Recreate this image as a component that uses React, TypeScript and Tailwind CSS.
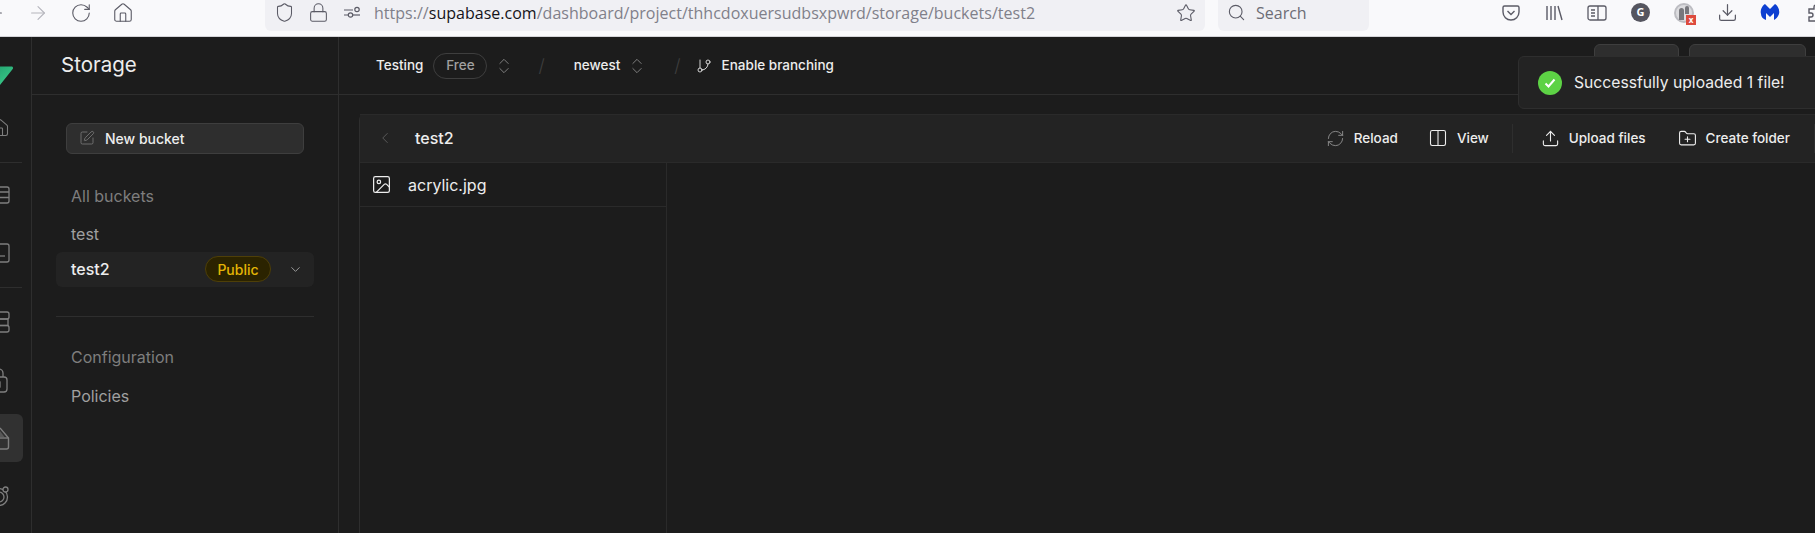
import React from 'react';
import {
  ArrowLeft,
  ArrowRight,
  ChevronDown,
  ChevronLeft,
  ChevronsUpDown,
  Columns2,
  Download,
  FolderPlus,
  GitBranch,
  Home,
  Image,
  Lock,
  RefreshCw,
  RotateCw,
  Search,
  Shield,
  SquarePen,
  Star,
  Upload,
} from 'lucide-react';

const RailButton: React.FC<{ active?: boolean; children: React.ReactNode }> = ({ active, children }) => (
  <div className={`flex h-[48px] w-[46px] items-center justify-center rounded-md text-[#7e7e7e] ${active ? 'bg-[#313131]' : ''}`}>
    {children}
  </div>
);

const BrowserBar = () => (
  <div className="flex h-[37px] shrink-0 items-start overflow-hidden border-b border-[#d4d4d8] bg-[#f9f9fb] font-['Open_Sans',sans-serif] text-[#5b5b66]">
    <div className="-ml-[27px] flex h-[25px] shrink-0 items-center">
      <div className="flex w-[43px] justify-center"><ArrowLeft size={22} strokeWidth={1.2} /></div>
      <div className="flex w-[43px] justify-center text-[#b5b5bc]"><ArrowRight size={22} strokeWidth={1.2} /></div>
      <div className="flex w-[43px] justify-center"><RotateCw size={22} strokeWidth={1.2} /></div>
      <div className="-ml-[1px] flex w-[43px] justify-center"><Home size={22} strokeWidth={1.2} /></div>
    </div>
    <div className="ml-[121px] flex h-[31px] w-[940px] shrink-0 items-center rounded-b-md bg-[#f0f0f4] pb-[6px] pl-[9px] pr-[9px]">
      <Shield size={21} strokeWidth={1.2} />
      <Lock size={21} strokeWidth={1.2} className="ml-[13px]" />
      <svg width="20" height="20" viewBox="0 0 20 20" fill="none" stroke="currentColor" strokeWidth="1.2" className="ml-[13px]">
        <path d="M2 7h9M2 12h4" />
        <circle cx="15" cy="6.500" r="2.200" />
        <circle cx="8.500" cy="12" r="2.200" />
        <path d="M11 12h7" />
      </svg>
      <span className="ml-[12px] whitespace-nowrap text-[16px] tracking-[0.02px] text-[#80808a]">
        https://<span className="text-[#15141a]">supabase.com</span>/dashboard/project/thhcdoxuersudbsxpwrd/storage/buckets/test2
      </span>
      <Star size={20} strokeWidth={1.3} className="ml-auto" />
    </div>
    <div className="ml-[13px] flex h-[31px] w-[151px] shrink-0 items-center rounded-b-md bg-[#f0f0f4] pb-[6px] pl-[9px]">
      <Search size={19} strokeWidth={1.4} />
      <span className="ml-[10px] text-[16px] text-[#6d6d76]">Search</span>
    </div>
    <div className="flex h-[25px] shrink-0 items-center">
      <svg width="20" height="20" viewBox="0 0 20 20" fill="none" stroke="currentColor" strokeWidth="1.4" className="ml-[132px]">
        <path d="M3.500 3h13A1.500 1.500 0 0 1 18 4.500V9a8 8 0 0 1-16 0V4.500A1.500 1.500 0 0 1 3.500 3z" />
        <path d="M6.500 8l3.500 3.500L13.500 8" />
      </svg>
      <svg width="20" height="20" viewBox="0 0 20 20" fill="none" stroke="currentColor" strokeWidth="1.400" className="ml-[23px]">
        <path d="M3 3v14M7 3v14M11 3v14M14 3l4 14" />
      </svg>
      <svg width="20" height="20" viewBox="0 0 20 20" fill="none" stroke="currentColor" strokeWidth="1.300" className="ml-[23px]">
        <rect x="1" y="3" width="18" height="14" rx="2" />
        <path d="M11 3v14M4 7h4M4 10h4M4 13h4" />
      </svg>
      <div className="ml-[24px] flex h-[19px] w-[19px] items-center justify-center rounded-full bg-[#55555f] text-[11px] font-bold text-white">G</div>
      <div className="relative ml-[24px] h-[20px] w-[20px] overflow-visible rounded-full border-2 border-[#bdbdc2] bg-[#dcdcdf]">
        <div className="absolute left-[3px] top-[3px] h-[12px] w-[5px] rounded-t-full bg-[#77777c]" />
        <div className="absolute left-[9px] top-[1px] h-[8px] w-[4px] rounded-t-full bg-[#77777c]" />
        <div className="absolute -bottom-[4px] -right-[4px] flex h-[10px] w-[10px] items-center justify-center bg-[#dd4b3e] text-[8px] font-bold leading-none text-white">x</div>
      </div>
      <Download size={21} strokeWidth={1.400} className="ml-[23px]" />
      <svg width="20" height="20" viewBox="0 0 20 20" className="ml-[22px]">
        <path d="M5 1 L10 6 L15 1 C18 3 20 7 19 11 C18 14 16 16 14 17 L14 10 L10 14 L6 10 L6 17 C3 16 1 14 1 11 C0 7 2 3 5 1Z" fill="#0d3fd1" />
      </svg>
      <svg width="20" height="20" viewBox="0 0 20 20" fill="none" stroke="currentColor" strokeWidth="1.400" className="ml-[27px]">
        <path d="M2 6h5V4a2 2 0 0 1 4 0v2h5v5h2a2 2 0 0 1 0 4h-2v3H2v-4h2a2 2 0 0 0 0-4H2z" />
      </svg>
    </div>
  </div>
);

const Rail = () => (
  <div className="w-[32px] shrink-0 overflow-hidden border-r border-[#2e2e2e]">
    <div className="-ml-[23px] flex w-[46px] flex-col items-center">
      <div className="flex h-[48px] w-full items-end justify-center">
        <svg width="30" height="19" viewBox="0 0 30 19">
          <defs>
            <linearGradient id="brand" x1="0" y1="0" x2="1" y2="1">
              <stop offset="0" stopColor="#1f9d6b" />
              <stop offset="1" stopColor="#3ecf8e" />
            </linearGradient>
          </defs>
          <path d="M5 0.500H26.500C28 0.500 28.500 2 27.500 3.200L15 19H5z" fill="url(#brand)" />
        </svg>
      </div>
      <div className="mt-[19px] w-full">
        <RailButton><Home size={20} strokeWidth={1.300} /></RailButton>
      </div>
      <div className="mb-[8px] mt-[10px] h-px w-[44px] bg-[#2e2e2e]" />
      <div className="flex w-full flex-col gap-[10px]">
        <RailButton>
          <svg width="20" height="20" viewBox="0 0 20 20" fill="none" stroke="currentColor" strokeWidth="1.300">
            <rect x="1" y="2" width="18" height="16" rx="2" />
            <path d="M1 7h18M1 12.500h18" />
          </svg>
        </RailButton>
        <RailButton>
          <svg width="20" height="20" viewBox="0 0 20 20" fill="none" stroke="currentColor" strokeWidth="1.300">
            <rect x="1" y="1" width="18" height="18" rx="2" />
            <path d="M8 13h7" />
          </svg>
        </RailButton>
      </div>
      <div className="my-[10px] h-px w-[44px] bg-[#2e2e2e]" />
      <div className="flex w-full flex-col gap-[10px]">
        <RailButton>
          <svg width="20" height="22" viewBox="0 0 20 22" fill="none" stroke="currentColor" strokeWidth="1.300">
            <rect x="-4" y="1" width="23" height="7" rx="2" />
            <rect x="-4" y="8" width="22" height="6.500" />
            <rect x="-4" y="14.500" width="23" height="6.500" rx="2" />
          </svg>
        </RailButton>
        <RailButton>
          <svg width="20" height="26" viewBox="0 0 20 26" fill="none" stroke="currentColor" strokeWidth="1.300">
            <path d="M5 10V6a4 4 0 0 1 8 0v4" />
            <rect x="-2" y="10" width="19" height="15" rx="3" />
            <rect x="-2" y="15" width="12" height="5" />
          </svg>
        </RailButton>
        <RailButton active>
          <svg width="20" height="24" viewBox="0 0 20 24" fill="none" stroke="currentColor" strokeWidth="1.400">
            <path d="M10 2L18.500 12V21a2 2 0 0 1-2 2H0" />
            <path d="M0 12h18.500" />
            <path d="M10 5L14.500 11H10z" fill="currentColor" fillOpacity="0.5" stroke="none" />
          </svg>
        </RailButton>
        <RailButton>
          <svg width="20" height="20" viewBox="0 0 20 20" fill="none" stroke="currentColor" strokeWidth="1.300">
            <circle cx="9" cy="11" r="8.500" />
            <circle cx="9" cy="11" r="5" />
            <circle cx="15.500" cy="3.500" r="2.500" fill="#1c1c1c" />
          </svg>
        </RailButton>
      </div>
    </div>
  </div>
);

const Sidebar = () => (
  <div className="w-[307px] shrink-0 border-r border-[#2e2e2e]">
    <div className="flex h-[58px] items-center border-b border-[#2e2e2e] pl-[29px] text-[20.500px] text-[#ededed]">Storage</div>
    <div className="px-[24px] pt-[28px]">
      <div className="mx-[10px] flex h-[31px] items-center gap-[10px] rounded-md border border-[#3e3e3e] bg-[#2e2e2e] pb-[1px] pl-[12px] text-[14px] font-medium text-[#ededed]">
        <SquarePen size={16} strokeWidth={1.200} className="text-[#7e7e7e]" />
        New bucket
      </div>
      <div className="mt-[30px] px-[15px] text-[16px] leading-[24px] text-[#7e7e7e]">All buckets</div>
      <div className="mt-[14px] px-[15px] text-[16px] leading-[24px] text-[#a0a0a0]">test</div>
      <div className="mt-[6px] flex h-[35px] items-center rounded-md bg-[#232323] pb-[1px] pl-[15px] pr-[11px]">
        <span className="text-[16px] font-medium text-[#ededed]">test2</span>
        <span className="ml-auto flex h-[26px] w-[66px] items-center justify-center rounded-full border border-[#4e3f08] bg-[#2b2300] text-[14px] font-medium text-[#e3b505]">Public</span>
        <ChevronDown size={15} strokeWidth={1.500} className="ml-[17px] text-[#a0a0a0]" />
      </div>
      <div className="mt-[29px] h-px bg-[#2e2e2e]" />
      <div className="mt-[28px] px-[15px] text-[16px] leading-[24px] text-[#7e7e7e]">Configuration</div>
      <div className="mt-[15px] px-[15px] text-[16px] leading-[24px] text-[#a0a0a0]">Policies</div>
    </div>
  </div>
);

const Slash: React.FC<{ className: string }> = ({ className }) => (
  <span className={`text-[18px] font-light text-[#3e3e3e] ${className}`}>/</span>
);

const ToolbarAction: React.FC<{ icon: React.ReactNode; label: string; className?: string }> = ({ icon, label, className }) => (
  <div className={`flex items-center gap-[9px] text-[13.500px] font-medium text-[#ededed] ${className ?? ''}`}>
    {icon}
    {label}
  </div>
);

const MainPanel = () => (
  <div className="flex min-w-0 flex-1 flex-col">
    <div className="flex h-[58px] shrink-0 items-center border-b border-[#2e2e2e] pl-[37px] text-[13.500px] font-medium text-[#ededed]">
      Testing
      <span className="ml-[10px] flex h-[26px] w-[54px] items-center justify-center rounded-full border border-[#3e3e3e] text-[#a0a0a0]">Free</span>
      <ChevronsUpDown size={20} strokeWidth={1.200} className="ml-[7px] text-[#7e7e7e]" />
      <Slash className="ml-[24px] mr-[29px]" />
      newest
      <ChevronsUpDown size={20} strokeWidth={1.200} className="ml-[7px] text-[#7e7e7e]" />
      <Slash className="ml-[27px] mr-[15px]" />
      <GitBranch size={16} strokeWidth={1.300} />
      <span className="ml-[10px]">Enable branching</span>
      <div className="mb-[8px] ml-auto flex gap-[10px] pr-[9px]">
        <div className="h-[36px] w-[85px] rounded-md border border-[#3e3e3e] bg-[#2e2e2e]" />
        <div className="h-[36px] w-[117px] rounded-md border border-[#3e3e3e] bg-[#2e2e2e]" />
      </div>
    </div>
    <div className="flex min-h-0 flex-1 flex-col pl-[20px] pt-[19px]">
      <div className="flex min-h-0 flex-1 flex-col rounded-tl-md border-l border-[#2e2e2e]">
        <div className="flex h-[49px] shrink-0 items-center border-b border-t border-[#2a2a2a] bg-[#232323] pb-[1px]">
          <ChevronLeft size={18} strokeWidth={1.300} className="ml-[16px] text-[#5a5a5a]" />
          <span className="ml-[21px] text-[16px] font-medium text-[#ededed]">test2</span>
          <ToolbarAction className="ml-auto" icon={<RefreshCw size={19} strokeWidth={1} className="text-[#a0a0a0]" />} label="Reload" />
          <ToolbarAction className="ml-[30px]" icon={<Columns2 size={20} strokeWidth={1.300} />} label="View" />
          <div className="ml-[23px] h-[29px] w-px bg-[#2e2e2e]" />
          <ToolbarAction className="ml-[28px]" icon={<Upload size={19} strokeWidth={1.400} />} label="Upload files" />
          <ToolbarAction className="ml-[32px]" icon={<FolderPlus size={19} strokeWidth={1.400} />} label="Create folder" />
          <div className="ml-[24px] h-[29px] w-px bg-[#2e2e2e]" />
        </div>
        <div className="min-h-0 flex-1">
          <div className="h-full w-[307px] border-r border-[#2a2a2a]">
            <div className="flex h-[44px] items-center border-b border-[#2a2a2a] pl-[11px] text-[16px] text-[#ededed]">
              <Image size={21} strokeWidth={1.400} />
              <span className="ml-[16px]">acrylic.jpg</span>
            </div>
          </div>
        </div>
      </div>
    </div>
  </div>
);

export default function App() {
  return (
    <div className="relative flex h-[533px] w-[1815px] flex-col overflow-hidden bg-[#1c1c1c] font-['Inter',sans-serif]">
      <BrowserBar />
      <div className="flex min-h-0 flex-1">
        <Rail />
        <Sidebar />
        <MainPanel />
      </div>
      {/* toast sits over the header */}
      <div className="absolute left-[1518px] top-[56px] flex h-[53px] w-[310px] items-center rounded-md border border-[#2e2e2e] bg-[#232323] pl-[19px]">
        <div className="flex h-[24px] w-[24px] items-center justify-center rounded-full bg-[#5dd245]">
          <svg width="14" height="14" viewBox="0 0 14 14" fill="none" stroke="white" strokeWidth="2">
            <path d="M2.500 7.500l3 3 6-7" />
          </svg>
        </div>
        <span className="ml-[12px] whitespace-nowrap text-[15.700px] text-[#ededed]">Successfully uploaded 1 file!</span>
      </div>
    </div>
  );
}
